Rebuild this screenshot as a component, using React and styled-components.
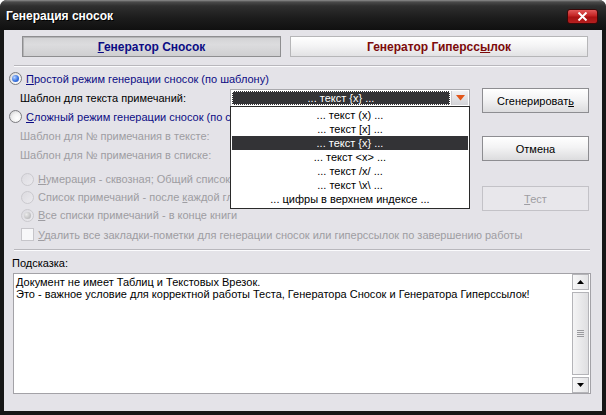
import React from 'react';
import styled, { createGlobalStyle, css } from 'styled-components';

const GlobalStyle = createGlobalStyle`
  html, body {
    margin: 0;
    padding: 0;
    background: #ffffff;
  }
  body {
    font-family: "Liberation Sans", Arial, sans-serif;
    font-size: 11px;
    color: #000;
  }
`;

const NAVY = '#0c0c84';
const GREY_TEXT = '#9e9da2';

const templates = [
  '... текст (x) ...',
  '... текст [x] ...',
  '... текст {x} ...',
  '... текст <x> ...',
  '... текст /x/ ...',
  '... текст \\x\\ ...',
  '... цифры в верхнем индексе ...',
];

const Window = styled.div`
  width: 606px;
  height: 415px;
  display: flex;
  flex-direction: column;
  background: #161616;
  border-radius: 7px 7px 0 0;
  overflow: hidden;
`;

const TitleBar = styled.div`
  height: 30px;
  flex: none;
  box-sizing: border-box;
  padding: 2px 8px 0 6px;
  display: flex;
  align-items: center;
  justify-content: space-between;
  background: linear-gradient(#8e8e8e 0, #4a4a4a 2px, #2f2f2f 6px, #1c1c1c 18px, #101010 30px);
`;

const Title = styled.span`
  color: #fff;
  font-weight: bold;
  font-size: 12px;
  text-shadow: 1px 1px 0 #000;
`;

const CloseButton = styled.div`
  width: 31px;
  height: 15px;
  box-sizing: border-box;
  border: 1px solid #3a0808;
  border-radius: 3px;
  background: linear-gradient(#e25a5a 0, #c32424 45%, #a81212 55%, #b52020 100%);
  display: flex;
  align-items: center;
  justify-content: center;
`;

const Body = styled.div`
  flex: 1;
  margin: 0 4px 4px;
  background: #e4e3e8;
  display: flex;
  flex-direction: column;
  padding: 0 0 0 5px;
`;

const TabsRow = styled.div`
  display: flex;
  gap: 9px;
  margin: 6px 0 0 13px;
`;

const TabButton = styled.div`
  width: ${p => p.$width}px;
  height: 21px;
  box-sizing: border-box;
  display: flex;
  align-items: center;
  justify-content: center;
  font-weight: bold;
  font-size: 12px;
  color: ${p => p.$color};
  ${p => p.$pressed
    ? css`
      border: 1px solid #8e8e90;
      background: linear-gradient(#d2d2d4 0, #dcdcde 40%, #cfcfd1 100%);
      box-shadow: inset 1px 1px 0 #b4b4b6;
    `
    : css`
      border: 1px solid #b6b6b8;
      background: linear-gradient(#ffffff 0, #f4f4f5 45%, #e2e2e4 100%);
    `}
`;

const Separator = styled.div`
  height: 0;
  border-top: 1px solid #b8b7bc;
  border-bottom: 1px solid #fbfbfd;
  margin: ${p => p.$top}px 12px 0 5px;
`;

const MainArea = styled.div`
  display: flex;
  margin-top: 2px;
`;

const LeftCol = styled.div`
  flex: 1;
  display: flex;
  flex-direction: column;
`;

const Row = styled.div`
  height: ${p => p.$h || 19}px;
  display: flex;
  align-items: center;
  gap: 4px;
  padding-left: ${p => p.$indent || 0}px;
  margin-top: ${p => p.$top || 0}px;
  white-space: nowrap;
  color: ${p => p.$color || '#000'};
  position: relative;
`;

const RadioCircle = styled.span`
  flex: none;
  width: 13px;
  height: 13px;
  box-sizing: border-box;
  border-radius: 50%;
  display: flex;
  align-items: center;
  justify-content: center;
  border: 1px solid ${p => (p.$disabled ? '#cac9ce' : '#7c7c80')};
  background: ${p => p.$disabled
    ? 'linear-gradient(135deg, #dcdbe0, #ebeaee)'
    : 'radial-gradient(circle at 65% 65%, #ffffff 0, #f2f2f2 45%, #c9c9cb 100%)'};
  &::after {
    content: '';
    display: ${p => (p.$checked ? 'block' : 'none')};
    width: 7px;
    height: 7px;
    border-radius: 50%;
    background: ${p => p.$disabled
      ? 'radial-gradient(circle at 35% 35%, #ececec 0, #c4c4c6 60%, #b0b0b3 100%)'
      : 'radial-gradient(circle at 35% 35%, #b8d4ff 0, #3b74e0 55%, #1c4fb8 100%)'};
  }
`;

const CheckBox = styled.span`
  flex: none;
  width: 13px;
  height: 13px;
  box-sizing: border-box;
  border: 1px solid #c6c5ca;
  background: #f7f7f9;
`;

const TemplateLabel = styled.span`
  width: 206px;
  flex: none;
`;

const ComboWrap = styled.div`
  position: relative;
  width: 240px;
  height: 18px;
  box-sizing: border-box;
  border: 1px solid #a9a9ad;
  background: #fff;
  display: flex;
`;

const ComboValue = styled.div`
  flex: 1;
  margin: 1px;
  background: #333336;
  color: #fff;
  display: flex;
  align-items: center;
  justify-content: center;
  outline: 1px dotted #ffffff;
  outline-offset: -1px;
`;

const ComboArrow = styled.div`
  width: 16px;
  flex: none;
  margin: 1px 1px 1px 0;
  background: linear-gradient(#f1f1f3, #d4d4d8);
  border-left: 1px solid #c9c9cd;
  display: flex;
  align-items: center;
  justify-content: center;
`;

const DropList = styled.div`
  position: absolute;
  top: 100%;
  left: -1px;
  width: 240px;
  box-sizing: border-box;
  border: 1px solid #2a2a2a;
  background: #fff;
  padding: 1px 0 2px;
  z-index: 5;
`;

const DropItem = styled.div`
  height: 14px;
  display: flex;
  align-items: center;
  justify-content: center;
  margin: 0 1px;
  color: ${p => (p.$active ? '#fff' : '#000')};
  background: ${p => (p.$active ? '#333336' : 'transparent')};
`;

const ButtonCol = styled.div`
  width: 107px;
  flex: none;
  margin: 19px 13px 0 0;
  display: flex;
  flex-direction: column;
`;

const PushButton = styled.div`
  height: 25px;
  box-sizing: border-box;
  margin-top: ${p => p.$top || 0}px;
  display: flex;
  align-items: center;
  justify-content: center;
  border: 1px solid ${p => (p.$disabled ? '#c3c2c7' : '#8d8d91')};
  color: ${p => (p.$disabled ? GREY_TEXT : '#000')};
  background: ${p => p.$disabled
    ? '#e8e7eb'
    : 'linear-gradient(#ffffff 0, #f3f3f4 45%, #dcdcde 100%)'};
`;

const HintLabel = styled.div`
  height: 14px;
  margin: 5px 0 0 3px;
  display: flex;
  align-items: center;
`;

const HintBox = styled.div`
  height: 121px;
  box-sizing: border-box;
  margin: 3px 11px 0 4px;
  border: 1px solid #a3a2a7;
  background: #fff;
  display: flex;
`;

const HintText = styled.div`
  flex: 1;
  padding: 2px 2px;
  line-height: 12px;
`;

const ScrollBar = styled.div`
  width: 17px;
  flex: none;
  margin: 0 1px 0 0;
  display: flex;
  flex-direction: column;
  padding: 0;
`;

const ScrollButton = styled.div`
  height: 16px;
  flex: none;
  box-sizing: border-box;
  border: 1px solid #b4b4b8;
  background: linear-gradient(90deg, #f7f7f8, #e4e4e6);
  display: flex;
  align-items: center;
  justify-content: center;
  margin-top: ${p => p.$top || 0}px;
`;

const ScrollThumb = styled.div`
  flex: 1;
  margin-top: 2px;
  box-sizing: border-box;
  border: 1px solid #b4b4b8;
  background: linear-gradient(90deg, #f4f4f5, #dfdfe1);
  display: flex;
  align-items: center;
  justify-content: center;
`;

const Grip = styled.div`
  width: 7px;
  height: 7px;
  background: repeating-linear-gradient(#9a9a9e 0 1px, transparent 1px 2px);
`;

const Radio = ({ checked, disabled, children, indent, top, h }) => (
  <Row $indent={indent} $top={top} $h={h} $color={disabled ? GREY_TEXT : NAVY}>
    <RadioCircle $checked={checked} $disabled={disabled} />
    <span>{children}</span>
  </Row>
);

const App = () => (
  <>
    <GlobalStyle />
    <Window>
      <TitleBar>
        <Title>Генерация сносок</Title>
        <CloseButton>
          <svg width="11" height="9" viewBox="0 0 11 9">
            <path d="M1.5 0.5 L9.5 8.5 M9.5 0.5 L1.5 8.5" stroke="#fff" strokeWidth="2" />
          </svg>
        </CloseButton>
      </TitleBar>
      <Body>
        <TabsRow>
          <TabButton $width={259} $pressed $color={NAVY}>
            <span><u>Г</u>енератор Сносок</span>
          </TabButton>
          <TabButton $width={298} $color="#7c0a0a">
            <span>Генератор Гиперсс<u>ы</u>лок</span>
          </TabButton>
        </TabsRow>
        <Separator $top={8} />
        <MainArea>
          <LeftCol>
            <Radio checked><u>П</u>ростой режим генерации сносок (по шаблону)</Radio>
            <Row $indent={11}>
              <TemplateLabel>Шаблон для текста примечаний:</TemplateLabel>
              <ComboWrap>
                <ComboValue>... текст {'{x}'} ...</ComboValue>
                <ComboArrow>
                  <svg width="9" height="6" viewBox="0 0 9 6">
                    <path d="M0 0 H9 L4.5 5.5 Z" fill="#e2561a" />
                  </svg>
                </ComboArrow>
                <DropList>
                  {templates.map((t, i) => (
                    <DropItem key={t} $active={i === 2}>{t}</DropItem>
                  ))}
                </DropList>
              </ComboWrap>
            </Row>
            <Radio><u>С</u>ложный режим генерации сносок (по списку)</Radio>
            <Row $indent={11} $color={GREY_TEXT}>Шаблон для № примечания в тексте:</Row>
            <Row $indent={11} $color={GREY_TEXT}>Шаблон для № примечания в списке:</Row>
            <Radio disabled indent={12} top={6} h={18}>
              <u>Н</u>умерация - сквозная; Общий список в конце книги
            </Radio>
            <Radio disabled indent={12} h={18}>
              Список примечаний - после <u>к</u>аждой главы
            </Radio>
            <Radio disabled checked indent={12} h={18}>
              <u>В</u>се списки примечаний - в конце книги
            </Radio>
          </LeftCol>
          <ButtonCol>
            <PushButton>Сгенерироват<u>ь</u></PushButton>
            <PushButton $top={23}>Отмена</PushButton>
            <PushButton $top={25} $disabled><span><u>Т</u>ест</span></PushButton>
          </ButtonCol>
        </MainArea>
        <Row $indent={12} $top={1} $color={GREY_TEXT}>
          <CheckBox />
          <span><u>У</u>далить все закладки-пометки для генерации сносок или гиперссылок по завершению работы</span>
        </Row>
        <Separator $top={5} />
        <HintLabel>Подсказка:</HintLabel>
        <HintBox>
          <HintText>
            Документ не имеет Таблиц и Текстовых Врезок.
            <br />
            Это - важное условие для корректной работы Теста, Генератора Сносок и Генератора Гиперссылок!
          </HintText>
          <ScrollBar>
            <ScrollButton>
              <svg width="7" height="4" viewBox="0 0 7 4"><path d="M3.5 0 L7 4 H0 Z" fill="#000" /></svg>
            </ScrollButton>
            <ScrollThumb><Grip /></ScrollThumb>
            <ScrollButton $top={2}>
              <svg width="7" height="4" viewBox="0 0 7 4"><path d="M0 0 H7 L3.5 4 Z" fill="#000" /></svg>
            </ScrollButton>
          </ScrollBar>
        </HintBox>
      </Body>
    </Window>
  </>
);

export default App;
